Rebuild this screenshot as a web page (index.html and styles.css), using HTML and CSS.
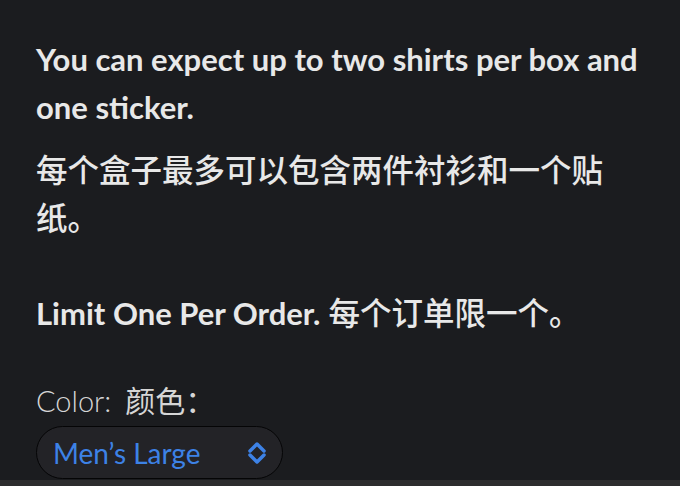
FILE: index.html
```html
<!DOCTYPE html>
<html lang="zh-CN">

<head>
  <meta charset="UTF-8" />
  <meta name="viewport" content="width=device-width, initial-scale=1.0" />
  <title>Sticker Box</title>
  <link rel="stylesheet" href="styles.css">
</head>

<body>
  <!-- Product notes -->
  <div class="product">
    <p class="note"><strong>You can expect up to two shirts per box and one sticker.</strong></p>
    <p class="note note-zh"><span class="zh">每个盒子最多可以包含两件衬衫和一个贴纸。</span></p>
    <p class="note note-last"><strong>Limit One Per Order.</strong> <span class="zh">每个订单限一个。</span></p>

    <!-- Size picker -->
    <div class="option">
      <label for="colorSelect">Color: <span class="zh-label">颜色：</span></label>
      <div class="select">
        <span id="colorSelect">Men’s Large</span>
        <svg class="chevrons" width="24" height="26" viewBox="0 0 24 26">
          <path d="M5 11 L12 4 L19 11" />
          <path d="M5 15 L12 22 L19 15" />
        </svg>
      </div>
    </div>
  </div>

  <div class="footer-bar"></div>
</body>

</html>
```

FILE: styles.css
```css
body {
  font-family: "Lato", "Noto Sans CJK SC", sans-serif;
  background-color: #1b1c1f;
  margin: 0;
  padding: 0;
  color: #e8e8e8;
  height: 486px;
  display: flex;
  flex-direction: column;
  overflow: hidden;
}

/* Product Notes */
.product {
  flex: 1;
  padding: 35px 36px 0 36px;
  font-size: 31px;
  line-height: 48px;
}

.note {
  margin: 0 0 15px 0;
}

.zh {
  font-size: 31.5px;
  font-weight: 500;
}

/* blank line after the chinese note */
.note-zh {
  margin-bottom: 47px;
}

.note-last {
  margin-bottom: 0;
}

.note strong {
  font-weight: bold;
}

/* Size Picker */
.option {
  margin-top: 47px;
}

.option label {
  display: block;
  font-size: 29px;
  line-height: 32px;
  color: #d6d6d6;
  font-weight: 300;
}

.zh-label {
  margin-left: 6px;
  font-size: 30px;
  font-weight: 400;
}

.select {
  display: flex;
  align-items: center;
  justify-content: space-between;
  width: 247px;
  height: 53px;
  box-sizing: border-box;
  margin-top: 9px;
  padding: 0 13px 0 16px;
  border: 1px solid #050506;
  border-radius: 27px;
  background-color: #232327;
  color: #3d82e6;
  font-size: 28px;
  line-height: 52px;
}

.chevrons path {
  fill: none;
  stroke: #3d82e6;
  stroke-width: 3.5;
  stroke-linecap: round;
  stroke-linejoin: round;
}

.footer-bar {
  height: 6px;
  background-color: #2c2c2e;
}
```
